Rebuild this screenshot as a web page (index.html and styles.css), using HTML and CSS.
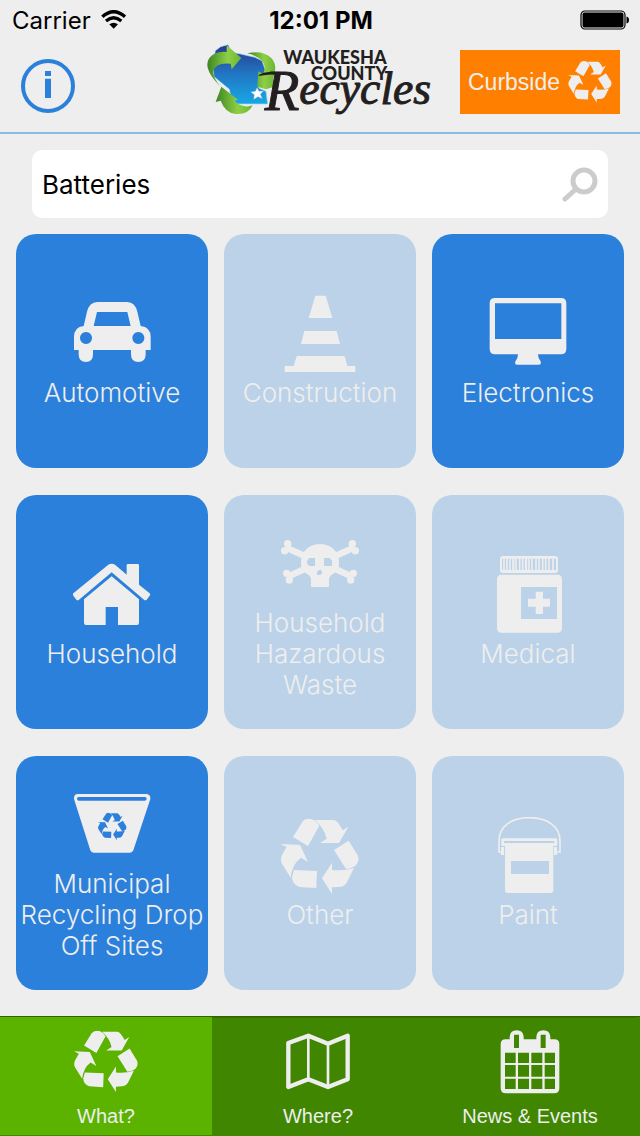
FILE: index.html
```html
<!DOCTYPE html>
<html lang="en">
<head>
  <meta charset="UTF-8">
  <title>Waukesha County Recycles</title>
  <meta name="viewport" content="width=device-width, initial-scale=1.0">
  <link rel="stylesheet" href="styles.css">
</head>
<body>
  <svg class="sprite" aria-hidden="true">
    <symbol id="recycle" viewBox="170 53 235 227">
      <path d="M207 108L235 63Q244 50 264 55Q278 60 286 74L252 135Z"/>
      <path d="M273 57L330 57Q342 60 356 88L373 77L345 126L288 126L308 113Q300 80 273 57Z"/>
      <path d="M330 147L374 119L401 163Q408 180 396 193Q384 203 366 204Z"/>
      <path d="M390 201L368 245Q361 257 345 258L324 259L324 279L294 232L324 185L324 207Q360 210 390 201Z"/>
      <path d="M210 207L279 210L277 261L226 258Q204 250 204 228Z"/>
      <path d="M170 129L228 132L252 183L231 170Q204 190 200 230L173 187Q168 175 174 162L188 138Z"/>
    </symbol>
  </svg>

  <div class="status">
    <span class="carrier">Carrier
      <svg width="26" height="20" viewBox="300 32 78 60">
        <g fill="none" stroke="#000" stroke-width="10">
          <path d="M304 52Q338 22 372 52"/>
          <path d="M315 65Q338 46 361 65"/>
        </g>
        <path d="M325 75Q338 65 351 75L338 88Z"/>
      </svg>
    </span>
    <strong>12:01 PM</strong>
    <svg class="battery" width="50" height="20" viewBox="0 0 50 20">
      <rect x="1" y="1" width="44" height="18" rx="4" fill="none" stroke="#000" stroke-width="1.2"/>
      <rect x="2.500" y="2.500" width="41" height="15" rx="2"/>
      <path d="M46.500 6.500Q49 7 49 10Q49 13 46.500 13.500Z"/>
    </svg>
  </div>

  <header class="header">
    <button class="info" aria-label="Information">
      <svg width="56" height="56" viewBox="60 174 168 168">
        <circle cx="144" cy="258" r="75" fill="none" stroke="#2b80db" stroke-width="12"/>
        <path fill="#2b80db" d="M135 213h18v15h-18zM135 236h18v58h-18z"/>
      </svg>
    </button>

    <svg class="logo" width="228" height="84" viewBox="18 42 684 252" role="img" aria-label="Waukesha County Recycles">
      <defs>
        <linearGradient id="lake" x1="0" y1="0" x2="0" y2="1">
          <stop offset="0" stop-color="#26388b"/>
          <stop offset=".5" stop-color="#2277c4"/>
          <stop offset="1" stop-color="#16a8e6"/>
        </linearGradient>
        <linearGradient id="leaf" x1="0" y1="0" x2="1" y2="0">
          <stop offset="0" stop-color="#3c8424"/>
          <stop offset=".6" stop-color="#8fcf45"/>
          <stop offset="1" stop-color="#6ab536"/>
        </linearGradient>
      </defs>
      <path fill="url(#lake)" stroke="#a8dcf5" stroke-width="2" d="M46 62L62 50L84 44L90 56L88 66L122 72L165 82L186 92L196 120L182 150L176 174L198 184L203 222L112 222L94 208L88 178L66 160L42 140L38 110Z"/>
      <path fill="url(#leaf)" d="M64 172Q6 116 28 84Q46 62 80 66L80 46L124 84L95 118L92 101Q50 96 40 122Q36 140 64 172Z"/>
      <path fill="url(#leaf)" d="M142 70Q188 60 214 84Q234 106 220 144L222 170L198 178L172 170L175 124L190 132Q200 108 186 92Q168 76 142 70Z"/>
      <path fill="url(#leaf)" d="M64 170L47 216L62 212Q76 250 108 252Q146 254 158 226Q130 236 102 214L114 209Z"/>
      <path fill="#fff" stroke="#9ab" stroke-width="1" d="M171 173L177 184L190 183L181 193L187 206L174 200L161 208L163 194L152 186L166 184Z"/>
      <path fill="#231f20" d="M174 138Q184 122 250 126L250 132Q210 132 174 138Z"/>
      <text class="logo-caps" x="250" y="101">WAUKESHA</text>
      <text class="logo-caps" x="333" y="149">COUNTY</text>
      <text class="logo-script"><tspan class="logo-r" x="194" y="240">R</tspan><tspan x="298" y="222">ecycles</tspan></text>
    </svg>

    <button class="curbside">
      Curbside
      <svg width="44" height="42"><use href="#recycle"/></svg>
    </button>
  </header>

  <main>
    <form class="search">
      <input type="text" value="Batteries" aria-label="Search items">
      <svg width="36" height="36" viewBox="0 0 36 36" fill="none" stroke="#ccc" stroke-width="5">
        <circle cx="22" cy="15" r="11"/>
        <path d="M14 23L3 33" stroke-linecap="round"/>
      </svg>
    </form>

    <div class="tiles">
      <button class="tile">
        <svg viewBox="171 42 234 234">
          <path fill-rule="evenodd" d="M203 135L213 92Q220 64 244 63H334Q357 64 364 92L374 135Q404 138 404 168V207H389V222Q388 243 367 243Q346 243 345 222V207H231V222Q230 243 210 243Q189 243 188 222V207H174V168Q174 138 203 135ZM243 93L233 135H344L334 93ZM210 153a18 18 0 1 0 .1 0ZM367 153a18 18 0 1 0 .1 0Z"/>
        </svg>
        <span>Automotive</span>
      </button>
      <button class="tile off">
        <svg viewBox="171 42 234 234">
          <path d="M274 44H305L325 111H254ZM241 150H338L348 189H231ZM221 225H359Q362 225 363 229L370 255H394V273H182V255H209L217 229Q218 225 221 225Z"/>
        </svg>
        <span>Construction</span>
      </button>
      <button class="tile">
        <svg viewBox="795 42 234 234">
          <path fill-rule="evenodd" d="M813 51H1011Q1027 51 1027 67V203Q1027 220 1011 220H942Q942 232 949 239Q954 251 945 251H879Q870 251 875 239Q882 232 882 220H813Q797 220 797 203V67Q797 51 813 51ZM813 67V174H1012V67Z"/>
        </svg>
        <span>Electronics</span>
      </button>

      <button class="tile">
        <svg viewBox="171 75 234 234">
          <path d="M172 187L276 102Q287 94 298 102L332 131V103Q332 99 336 99H365Q369 99 369 103V161L401 187Q404 190 401 194L392 206Q388 209 384 206L287 124L189 206Q185 209 181 206L172 194Q169 190 172 187Z"/>
          <path d="M287 136L369 205V276Q369 282 363 282H306V228H269V282H210Q204 282 204 276V205Z"/>
        </svg>
        <span>Household</span>
      </button>
      <button class="tile off">
        <svg viewBox="171 12 234 234">
          <g fill="none" stroke="#eee" stroke-width="19">
            <path d="M186 80L242 105M390 80L334 105M192 167L242 144M384 167L334 144"/>
          </g>
          <circle cx="191" cy="68" r="11"/><circle cx="182" cy="89" r="11"/>
          <circle cx="385" cy="68" r="11"/><circle cx="394" cy="89" r="11"/>
          <circle cx="188" cy="157" r="11"/><circle cx="196" cy="177" r="11"/>
          <circle cx="388" cy="157" r="11"/><circle cx="380" cy="177" r="11"/>
          <path fill-rule="evenodd" d="M288 69Q320 69 336 92Q346 108 345 127Q344 150 328 158Q315 166 315 174V195Q315 198 312 198H264Q261 198 261 195V174Q261 166 248 158Q232 150 231 127Q230 108 240 92Q256 69 288 69ZM256 111L249 119V127L256 135H273V111ZM300 111V135H324V119L317 111ZM284 147L279 153V162H289L294 157V150L290 147Z"/>
        </svg>
        <span>Household Hazardous Waste</span>
      </button>
      <button class="tile off">
        <svg viewBox="795 105 234 234">
          <path fill-rule="evenodd" d="M837 105H993Q1002 105 1002 114V147Q1002 156 993 156H837Q828 156 828 147V114Q828 105 837 105ZM834 113V147H996V113Z"/>
          <path fill="none" stroke="#eee" stroke-width="5" d="M840 112V149M849 112V149M858 112V149M876 112V149M887 112V149M896 112V149M915 112V149M924 112V149M936 112V149M945 112V149M956 112V149M965 112V149M975 112V149M987 112V149"/>
          <path fill="none" stroke="#eee" stroke-width="7" d="M868 112V149M906 112V149"/>
          <path fill-rule="evenodd" d="M833 161H1000Q1014 161 1014 175V320Q1014 335 1000 335H833Q819 335 819 320V175Q819 161 833 161ZM891 198V294H999V198ZM935 212H957V233H978V257H957V279H935V257H912V233H935Z"/>
        </svg>
        <span>Medical</span>
      </button>

      <button class="tile">
        <svg viewBox="171 15 234 234">
          <path fill-rule="evenodd" d="M184 39H392Q404 41 403 54L352 208Q349 215 342 215H233Q226 215 223 208L174 54Q173 41 184 39ZM188 48Q183 49 183 53Q183 58 188 59H387Q392 58 392 53Q392 49 387 48Z"/>
          <use class="cutout" href="#recycle" x="246" y="95" width="86" height="83"/>
        </svg>
        <span>Municipal Recycling Drop Off Sites</span>
      </button>
      <button class="tile off">
        <svg viewBox="171 48 234 234">
          <use href="#recycle" x="170" y="53" width="235" height="227"/>
        </svg>
        <span>Other</span>
      </button>
      <button class="tile off">
        <svg viewBox="795 48 234 234">
          <path fill="none" stroke="#eee" stroke-width="5" d="M834 153H825V120C825 76 862 50 916 50S1008 76 1008 120V153H996"/>
          <path fill-rule="evenodd" d="M836 112H996Q1000 112 1000 117V131Q1000 135 996 135H988V267Q988 276 979 276H852Q843 276 843 267V135H836Q832 135 832 131V117Q832 112 836 112ZM840 120V126H991V120ZM861 180V219H975V180Z"/>
          <path d="M831 138H840V162H831ZM990 138H999V162H990Z"/>
        </svg>
        <span>Paint</span>
      </button>
    </div>
  </main>

  <nav class="tabs">
    <a class="tab active" href="#what">
      <svg viewBox="170 51 235 235"><use href="#recycle" x="170" y="53" width="235" height="227"/></svg>
      What?
    </a>
    <a class="tab" href="#where">
      <svg viewBox="858 90 192 192">
        <g fill="none" stroke="#eee" stroke-linejoin="round">
          <path stroke-width="13" d="M865 129L925 107L984 131L1043 107V238L984 261L925 238L865 261Z"/>
          <path stroke-width="8" d="M925 107V238M984 131V262"/>
        </g>
      </svg>
      Where?
    </a>
    <a class="tab" href="#news">
      <svg viewBox="414 90 192 192">
        <path fill-rule="evenodd" d="M437 118H449V110Q451 91 470 91Q489 91 491 110V118H529V110Q531 91 550 91Q569 91 571 110V118H583Q598 118 598 133V265Q598 280 583 280H437Q422 280 422 265V133Q422 118 437 118ZM462 104V144H477V104ZM542 104V144H557V104ZM435 158V189H467V158ZM474 158V189H507V158ZM514 158V189H547V158ZM554 158V189H585V158ZM435 195V230H467V195ZM474 195V230H507V195ZM514 195V230H547V195ZM554 195V230H585V195ZM435 236V267H467V236ZM474 236V267H507V236ZM514 236V267H547V236ZM554 236V267H585V236Z"/>
      </svg>
      News &amp; Events
    </a>
  </nav>
</body>
</html>
```
FILE: styles.css
```css
* { box-sizing: border-box; }
body { font-family: Inter, "Liberation Sans", sans-serif; margin: 0; background: #eee; min-height: 100vh; display: flex; flex-direction: column; }
button { border: 0; padding: 0; font: inherit; cursor: pointer; }
svg { display: block; flex: none; }
.sprite { position: absolute; width: 0; height: 0; }

.status { display: grid; grid-template-columns: 1fr auto 1fr; align-items: center; height: 40px; padding: 0 10px 0 12px; font-size: 24px; }
.status strong { font-weight: 700; }
.carrier { display: flex; align-items: center; gap: 10px; }
.battery { justify-self: end; }

.header { display: grid; grid-template-columns: 1fr auto 1fr; align-items: center; padding: 4px 20px; border-bottom: 2px solid #8abbe6; }
.info { background: none; justify-self: start; }
.logo-caps { font: 900 54px Lato, sans-serif; fill: #231f20; }
.logo-script { font: italic 137px "Liberation Serif", serif; fill: #231f20; stroke: #231f20; stroke-width: 3px; }
.logo-r { font-size: 170px; }
.curbside { display: flex; align-items: center; justify-content: space-between; justify-self: end; align-self: start; width: 160px; height: 64px; margin-top: 6px; padding: 0 8px; background: #ff8000; color: #eee; fill: #eee; font: 23px "Liberation Sans", sans-serif; }

main { padding: 16px; }
.search { display: flex; align-items: center; height: 68px; margin: 0 16px 16px; padding: 0 10px; background: #fff; border-radius: 10px; }
.search input { flex: 1; min-width: 0; border: 0; outline: 0; padding: 0; background: none; font: inherit; font-size: 26px; color: #000; }

.tiles { display: grid; grid-template-columns: repeat(3, 1fr); gap: 27px 16px; }
.tile { display: flex; flex-direction: column; align-items: center; justify-content: center; gap: 4px; min-height: 234px; border-radius: 20px; background: #2b80db; color: #eee; fill: #eee; font-size: 26px; font-weight: 300; line-height: 31px; }
.tile svg { width: 78px; height: 78px; }
.tile.off { background: #bcd2e9; }
.tile .cutout { fill: #2b80db; }

.tabs { display: grid; grid-template-columns: repeat(3, 1fr); margin-top: auto; padding-right: 4px; background: #408600; border-top: 1px solid #2f6300; }
.tab { display: flex; flex-direction: column; align-items: center; gap: 10px; height: 119px; padding-top: 12px; border-top: 1px solid #367200; color: #eee; fill: #eee; font: 20px/24px "Liberation Sans", sans-serif; text-decoration: none; }
.tab svg { width: 64px; height: 64px; }
.tab.active { background: #5bb300; border-top-color: #5bb300; border-bottom: 1px solid #408600; }
```
